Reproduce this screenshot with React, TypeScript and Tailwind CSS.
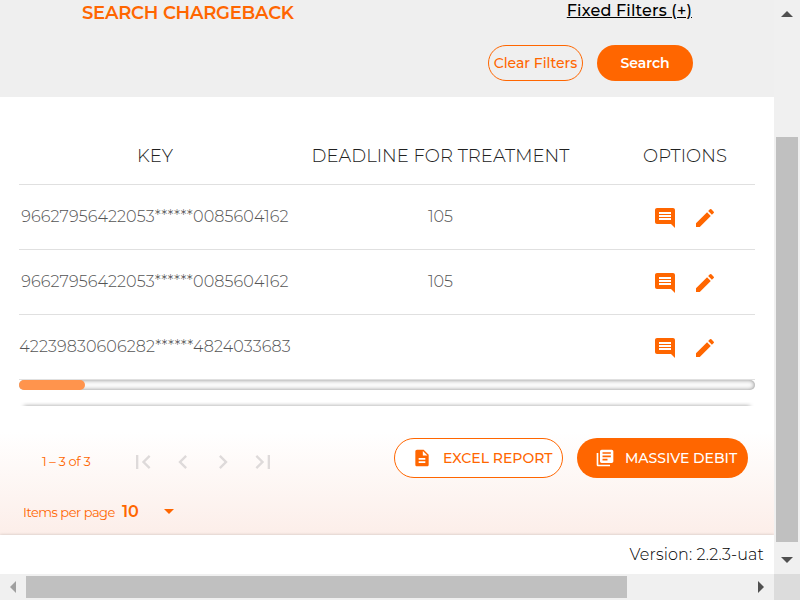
import { MdArrowDropDown, MdChevronLeft, MdChevronRight, MdComment, MdDescription, MdEdit, MdFirstPage, MdLastPage, MdLibraryBooks } from "react-icons/md";

const rows = [
  { key: "96627956422053******0085604162", deadline: "105" },
  { key: "96627956422053******0085604162", deadline: "105" },
  { key: "42239830606282******4824033683", deadline: "" },
];

function Filters() {
  return (
    <header className="h-[97px] bg-[#efefef] pl-[82px] pr-[81px]">
      <div className="flex h-[45px] justify-between">
        <h1 className="pt-[1px] text-[18px] leading-6 font-semibold tracking-[-0.23px] text-[#ff6600]">SEARCH CHARGEBACK</h1>
        <a className="-mt-[1px] mr-[1px] text-[16px] leading-6 font-medium tracking-[0.17px] text-black underline">Fixed Filters (+)</a>
      </div>
      <div className="flex justify-end gap-[14px]">
        <button className="h-9 w-[95px] rounded-full border border-[#ff6600] text-[14px] font-medium whitespace-nowrap text-[#ff6600]">Clear Filters</button>
        <button className="h-9 w-24 rounded-full bg-[#ff6600] text-[14px] font-semibold tracking-[-0.05px] text-white">Search</button>
      </div>
    </header>
  );
}

function Table() {
  return (
    <section className="mx-[19px] mt-[30px] w-[736px]">
      <div className="grid h-[58px] grid-cols-[272px_299px_165px] items-center border-b border-[#e0e0e0] pt-[2px] text-center text-[18px] font-light tracking-[0.05px] text-[#212121]">
        <span>KEY</span>
        <span>DEADLINE FOR TREATMENT</span>
        <span className="pl-[25px]">OPTIONS</span>
      </div>
      {rows.map((row, i) => (
        <div key={i} className="grid h-[65px] grid-cols-[272px_299px_165px] items-center border-b border-[#e0e0e0] text-center text-[16px] font-light text-[#555555]">
          <span className="whitespace-nowrap tracking-[0.1px]">{row.key}</span>
          <span>{row.deadline}</span>
          <span className="flex gap-4 pt-px pl-[63px] text-[#ff6600]">
            <MdComment size={24} />
            <MdEdit size={24} />
          </span>
        </div>
      ))}
      <div className="h-[10px] rounded-full bg-[#fafafa] shadow-[inset_0_0_4px_#888888]">
        <div className="h-full w-[66px] rounded-full bg-[#ff944d]" />
      </div>
      <div className="mt-3 h-[4px] overflow-hidden">
        <div className="mx-[5px] mt-[4px] h-1 shadow-[0_0_4px_#999999]" />
      </div>
    </section>
  );
}

function Paginator() {
  return (
    <section className="flex h-[129px] bg-linear-to-b from-white from-20% to-[#fceee9]">
      <div className="w-[394px] text-[#ff6600]">
        <div className="mt-[36px] flex h-10 items-center">
          <span className="ml-[42px] w-[81px] whitespace-nowrap text-[13px] tracking-[-0.37px]">1 – 3 of 3</span>
          <div className="flex text-[#dedada]">
            <span className="grid size-10 place-items-center"><MdFirstPage size={28} /></span>
            <span className="grid size-10 place-items-center"><MdChevronLeft size={28} /></span>
            <span className="grid size-10 place-items-center"><MdChevronRight size={28} /></span>
            <span className="grid size-10 place-items-center"><MdLastPage size={28} /></span>
          </div>
        </div>
        <div className="mt-[17px] flex h-6 items-center pl-[23px]">
          <span className="w-[98px] pt-[3px] text-[13px] tracking-[-0.5px] whitespace-nowrap">Items per page</span>
          <span className="w-[36px] pt-px pl-px text-[16px] font-semibold">10</span>
          <MdArrowDropDown size={24} />
        </div>
      </div>
      <div className="flex gap-[14px] pt-8 text-[14px] font-medium">
        <button className="flex h-10 w-[169px] items-center rounded-full border border-[#ff6600] bg-white pl-[17px] text-[#ff6600]">
          <MdDescription size={20} />
          <span className="ml-[11px] whitespace-nowrap">EXCEL REPORT</span>
        </button>
        <button className="flex h-10 w-[171px] items-center rounded-full bg-[#ff6600] pl-[18px] text-white">
          <MdLibraryBooks size={20} />
          <span className="ml-[10px] whitespace-nowrap">MASSIVE DEBIT</span>
        </button>
      </div>
    </section>
  );
}

function VerticalScrollbar() {
  return (
    <div className="flex h-[574px] w-[26px] flex-col items-center bg-[#f0f0f0]">
      <svg className="mt-[11px] h-[6px] w-3" viewBox="0 0 12 6"><path d="M0 6 6 0l6 6z" fill="#505050" /></svg>
      <div className="mt-[120px] h-[405px] w-[22px] bg-[#c0c0c0]" />
      <svg className="mt-[15px] h-[6px] w-3" viewBox="0 0 12 6"><path d="M0 0h12L6 6z" fill="#505050" /></svg>
    </div>
  );
}

function HorizontalScrollbar() {
  return (
    <div className="flex h-[26px] w-[774px] items-center bg-[#f0f0f0]">
      <svg className="ml-[10px] h-3 w-[6px]" viewBox="0 0 6 12"><path d="M6 0v12L0 6z" fill="#a0a0a0" /></svg>
      <div className="ml-[10px] h-[22px] w-[601px] bg-[#c0c0c0]" />
      <svg className="ml-[131px] h-3 w-[6px]" viewBox="0 0 6 12"><path d="M0 0v12l6-6z" fill="#505050" /></svg>
    </div>
  );
}

export default function App() {
  return (
    <div className="grid h-[600px] w-[800px] grid-cols-[774px_26px] grid-rows-[574px_26px] overflow-hidden bg-white font-[Montserrat,Inter,sans-serif]">
      <main className="h-[574px] overflow-hidden">
        <Filters />
        <Table />
        <Paginator />
        <footer className="h-[39px] bg-white pt-[8px] pr-[10px] text-right text-[16px] leading-6 font-light tracking-[0.12px] text-black shadow-[0_0_3px_#00000033]">Version: 2.2.3-uat</footer>
      </main>
      <VerticalScrollbar />
      <HorizontalScrollbar />
      <div className="bg-[#dcdcdc]" />
    </div>
  );
}
